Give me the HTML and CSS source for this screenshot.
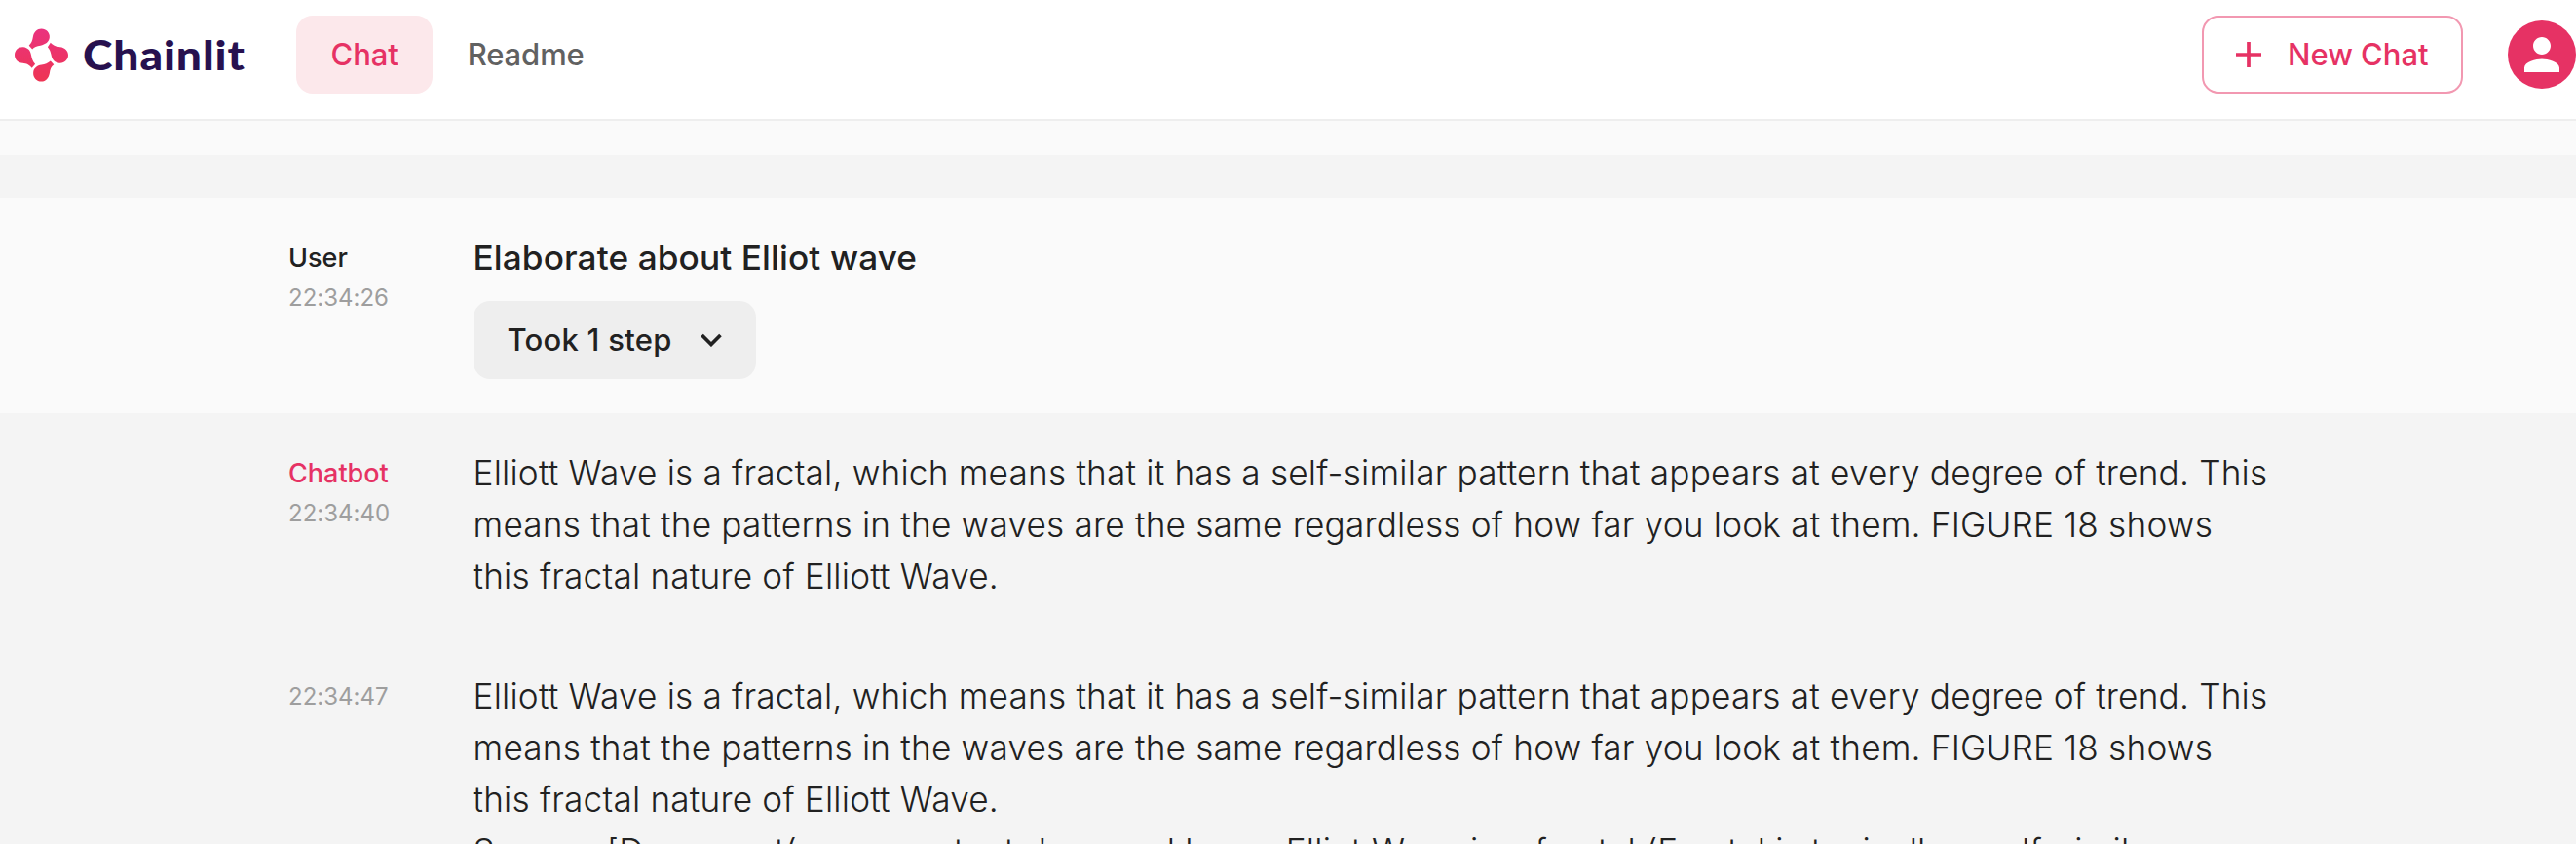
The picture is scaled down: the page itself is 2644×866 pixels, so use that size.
FILE: index.html
```html
<!DOCTYPE html>
<html lang="en">
<head>
<meta charset="utf-8">
<title>Chainlit</title>
<link rel="stylesheet" href="styles.css">
</head>
<body>
<header class="topbar">
  <a class="brand">
    <svg class="brand-mark" viewBox="0 0 56 56" aria-hidden="true">
      <defs>
        <linearGradient id="g" gradientUnits="userSpaceOnUse" x1="28" y1="0" x2="28" y2="56">
          <stop offset="0" stop-color="#ea327f"/><stop offset="1" stop-color="#ee3553"/>
        </linearGradient>
      </defs>
      <g fill="url(#g)">
        <path d="M28 0.500C33 0.500 37 4.500 36.500 9.500C36 14.500 32 17 27 18C23 18.500 20.500 19.500 18.500 22L15 18C18 15 18.500 13 19.300 8.500C20 4 23.500 0.500 28 0.500Z"/>
        <path d="M56 28C56 33 51.500 37 46.500 36.300C41.500 35.500 39 32.500 38.300 28C37.500 24 36.500 22 34.500 19.500L37.500 15C41 18.500 43 19 47.500 19.500C52.500 20 56 23.500 56 28Z"/>
        <path d="M28 55.500C23 55.500 19 51.500 19.500 46C20 41.500 23.500 39 28 38.300C32 37.500 34.500 36.500 37.500 34L41 38C38 40.500 37 43 36.500 47C35.500 52 32.500 55.500 28 55.500Z"/>
        <path d="M0 28C0 23 4 19.300 9 19.700C14 20.500 16.500 23 17.300 28C18 32 19 34.500 21.500 37.500L18 41.500C15 38 12.500 37 8.500 36.500C3.500 36 0 32.500 0 28Z"/>
      </g>
    </svg>
    <span class="brand-name">Chainlit</span>
  </a>
  <nav class="nav">
    <a class="nav-item active">Chat</a>
    <a class="nav-item">Readme</a>
  </nav>
  <button class="new-chat">
    <svg class="plus" viewBox="0 0 26 26" aria-hidden="true"><path d="M13 0V26M0 13H26" stroke="currentColor" stroke-width="3.700"/></svg>
    <span>New Chat</span>
  </button>
  <div class="avatar">
    <svg viewBox="0 0 24 24" aria-hidden="true"><path fill="#fff" d="M12 12c2.210 0 4-1.790 4-4s-1.790-4-4-4-4 1.790-4 4 1.790 4 4 4zm0 2c-2.670 0-8 1.340-8 4v2h16v-2c0-2.660-5.330-4-8-4z"/></svg>
  </div>
</header>
<main class="thread">
  <div class="previous"></div>
  <section class="message user">
    <div class="meta"><div class="author">User</div><time>22:34:26</time></div>
    <div class="body">
      <p class="question">Elaborate about Elliot wave</p>
      <button class="steps">
        <span>Took 1 step</span>
        <svg class="chevron" viewBox="0 0 22 14" aria-hidden="true"><path d="M1.500 2 11 11.500 20.500 2" fill="none" stroke="currentColor" stroke-width="3.700"/></svg>
      </button>
    </div>
  </section>
  <section class="message bot">
    <div class="meta"><div class="author">Chatbot</div><time>22:34:40</time></div>
    <div class="body"><p>Elliott Wave is a fractal, which means that it has a self-similar pattern that appears at every degree of trend. This<br>means that the patterns in the waves are the same regardless of how far you look at them. FIGURE 18 shows<br>this fractal nature of Elliott Wave.</p></div>
  </section>
  <section class="message bot follow">
    <div class="meta"><time>22:34:47</time></div>
    <div class="body"><p>Elliott Wave is a fractal, which means that it has a self-similar pattern that appears at every degree of trend. This<br>means that the patterns in the waves are the same regardless of how far you look at them. FIGURE 18 shows<br>this fractal nature of Elliott Wave.<br>Source: [Document(page_content='reversal home Elliot Wave is a fractal (Fractal is typically a self-similar</p></div>
  </section>
</main>
</body>
</html>
```

FILE: styles.css
```css
* { box-sizing: border-box; }
body { margin: 0; height: 866px; overflow: hidden; background: #f4f4f4; color: #212121; font-family: Inter, "Liberation Sans", sans-serif; font-variant-ligatures: none; font-optical-sizing: none; }
p { margin: 0; }
button { font: inherit; border: 0; background: none; }
.topbar { display: flex; align-items: center; height: 124px; padding: 0 0 10px 15px; background: #fff; border-bottom: 2px solid #eee; }
.brand { display: flex; align-items: center; width: 289px; }
.brand-mark { width: 55px; height: 55px; flex: none; }
.brand-name { margin-left: 15px; font-family: Lato, sans-serif; font-weight: 900; font-size: 42px; line-height: 50px; letter-spacing: 0.8px; color: #27114f; transform: scaleX(1.1); transform-origin: left; }
.nav { display: flex; }
.nav-item { display: flex; align-items: center; height: 80px; padding: 0 35.500px 1px; border-radius: 17px; font-size: 31px; font-weight: 500; letter-spacing: -0.1px; color: #616161; }
.nav-item.active { background: #fce8eb; color: #e63264; }
.new-chat { display: flex; align-items: center; width: 268px; height: 80px; margin-left: auto; padding: 0 0 1px 33px; border: 2px solid #f298b1; border-radius: 17px; color: #e63264; font-size: 31px; font-weight: 500; }
.plus { width: 26px; height: 26px; margin-right: 27px; }
.avatar { display: flex; align-items: center; justify-content: center; width: 70px; height: 70px; margin-left: 46px; border-radius: 50%; background: #e63264; flex: none; }
.avatar svg { width: 54px; height: 54px; }
.previous { height: 79px; border-bottom: 44px solid #f4f4f4; background: #fafafa; }
.message { display: flex; padding: 35px 0 0 296px; }
.meta { width: 189.500px; padding-top: 6px; flex: none; }
.author { font-size: 27px; line-height: 41px; font-weight: 500; }
.meta time { display: block; font-size: 24px; line-height: 41px; color: #9e9e9e; }
.user { height: 221px; background: #fafafa; }
.bot { height: 229px; }
.bot .author { color: #e63264; }
.body { font-size: 35.200px; line-height: 53px; font-weight: 300; letter-spacing: 0.19px; white-space: nowrap; }
.question { font-weight: 500; letter-spacing: 0.1px; }
.steps { display: flex; align-items: center; height: 80px; width: 290px; margin-top: 18px; padding: 0 35px 1px; border-radius: 17px; background: #eee; color: #212121; font-size: 31px; font-weight: 500; letter-spacing: 0.25px; }
.chevron { width: 22px; height: 14px; margin-left: 29px; }
```
